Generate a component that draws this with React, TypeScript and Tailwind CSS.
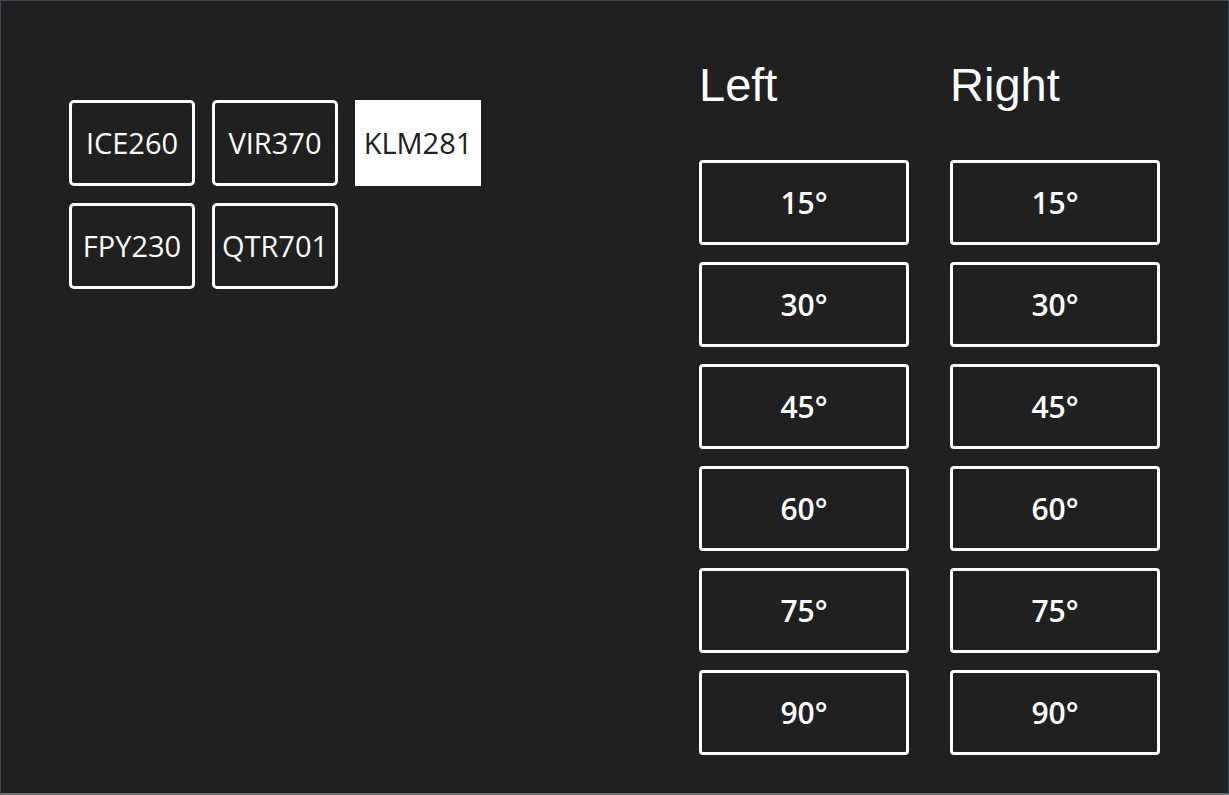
import React from 'react';

const flights = ['ICE260', 'VIR370', 'KLM281', 'FPY230', 'QTR701'];
const angles = ['15°', '30°', '45°', '60°', '75°', '90°'];

const AngleColumn = ({ title }: { title: string }) => (
    <div className="flex flex-col w-[210px]">
        <h2 className="h-[54px] leading-[54px] text-[47px] text-white font-['Liberation_Sans',Arial,sans-serif] mb-[48px]">
            {title}
        </h2>
        <div className="flex flex-col gap-[17px]">
            {angles.map((a) => (
                <button
                    key={a}
                    className="h-[85px] flex items-center justify-center border-[3px] border-white rounded-[4px] text-white text-[30px] font-semibold"
                >
                    {a}
                </button>
            ))}
        </div>
    </div>
);

export default function App() {
    return (
        <div className="w-[1229px] h-[795px] bg-[#202020] border-t border-x border-[#3c4a58] border-b-2 border-b-[#6e7072] flex font-['Open_Sans',sans-serif]">
            {/* Flights */}
            <div className="w-[698px] pl-[68px] pt-[99px]">
                <div className="grid grid-cols-[126px_126px_126px] gap-[17px]">
                    {flights.map((f) => {
                        const selected = f === 'KLM281';
                        return (
                            <button
                                key={f}
                                className={
                                    selected
                                        ? 'h-[86px] flex items-center justify-center bg-white text-[#202020] text-[29px]'
                                        : 'h-[86px] flex items-center justify-center border-[3px] border-white rounded-[5px] text-white text-[29px]'
                                }
                            >
                                {f}
                            </button>
                        );
                    })}
                </div>
            </div>

            {/* Angles */}
            <div className="pt-[57px] flex gap-[41px]">
                <AngleColumn title="Left" />
                <AngleColumn title="Right" />
            </div>
        </div>
    );
}
